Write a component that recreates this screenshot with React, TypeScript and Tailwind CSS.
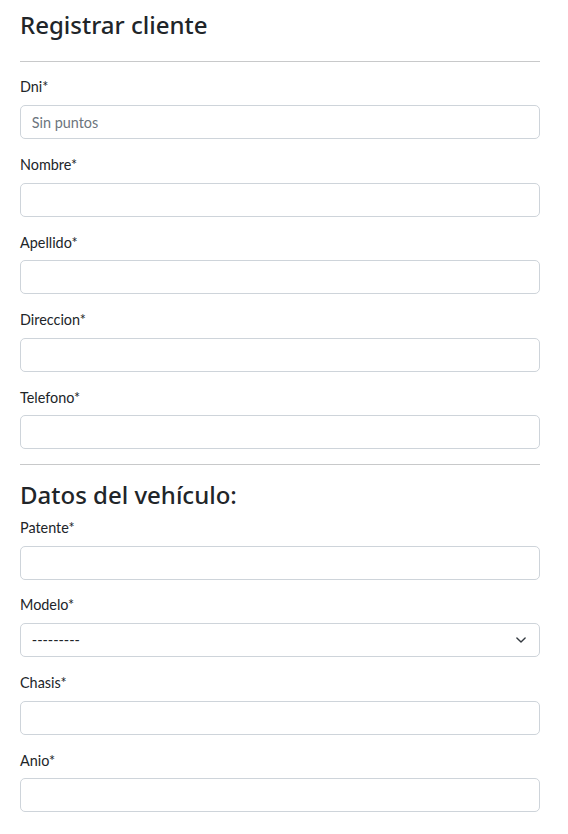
const clientFields = [
  { id: 'dni', label: 'Dni*', placeholder: 'Sin puntos' },
  { id: 'nombre', label: 'Nombre*' },
  { id: 'apellido', label: 'Apellido*' },
  { id: 'direccion', label: 'Direccion*' },
  { id: 'telefono', label: 'Telefono*' },
]

function Field({ id, label, placeholder }: { id: string; label: string; placeholder?: string }) {
  return (
    <div className="mb-[14.8px]">
      <label htmlFor={id} className="mb-[7.2px] block text-[14.4px] leading-[21.6px] text-[#212529]">
        {label}
      </label>
      <input
        id={id}
        type="text"
        placeholder={placeholder}
        className="block h-[34px] w-full rounded-[5px] border border-[#ced4da] bg-white px-[10.8px] text-[14.4px] text-[#212529] outline-none placeholder:text-[#6c757d]"
      />
    </div>
  )
}

function SelectField({ id, label }: { id: string; label: string }) {
  return (
    <div className="mb-[14.8px]">
      <label htmlFor={id} className="mb-[7.2px] block text-[14.4px] leading-[21.6px] text-[#212529]">
        {label}
      </label>
      <div className="relative">
        <select
          id={id}
          className="block h-[34px] w-full appearance-none rounded-[5px] border border-[#ced4da] bg-white px-[10.8px] text-[14.4px] text-[#212529] outline-none"
        >
          <option>---------</option>
        </select>
        <svg
          className="pointer-events-none absolute right-[12px] top-1/2 -translate-y-1/2"
          width="14"
          height="11"
          viewBox="0 0 16 16"
          fill="none"
          stroke="#343a40"
          strokeWidth="2"
          strokeLinecap="round"
          strokeLinejoin="round"
        >
          <path d="m2 5 6 6 6-6" />
        </svg>
      </div>
    </div>
  )
}

export default function App() {
  return (
    <div className="min-h-screen bg-white font-['Lato','Liberation_Sans',sans-serif] text-[#212529]">
      <form className="ml-[20px] w-[520px] pt-[10px]">
        <h3 className="text-[24px] leading-[30px] font-medium font-['Noto_Sans',sans-serif]">Registrar cliente</h3>
        <hr className="mt-[21px] mb-[14.4px] border-t border-[#c8c9ca]" />
        {clientFields.map((f) => (
          <Field key={f.id} {...f} />
        ))}
        <hr className="my-[14.4px] border-t border-[#c8c9ca]" />
        <h3 className="mb-[7.2px] text-[24px] leading-[30px] font-medium font-['Noto_Sans',sans-serif]">
          Datos del vehículo:
        </h3>
        <Field id="patente" label="Patente*" />
        <SelectField id="modelo" label="Modelo*" />
        <Field id="chasis" label="Chasis*" />
        <Field id="anio" label="Anio*" />
      </form>
    </div>
  )
}
